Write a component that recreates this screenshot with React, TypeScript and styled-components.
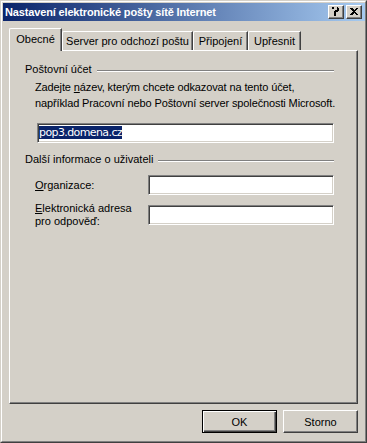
import React from 'react'
import styled, { createGlobalStyle } from 'styled-components'

const GlobalStyle = createGlobalStyle`
  html, body {
    margin: 0;
    padding: 0;
    background: #d4d0c8;
  }
  body {
    font-family: 'Liberation Sans', Arial, sans-serif;
    font-size: 11px;
    color: #000;
  }
`

const tabs = [
  { label: 'Obecné', width: 53, active: true },
  { label: 'Server pro odchozí poštu', width: 131 },
  { label: 'Připojení', width: 55 },
  { label: 'Upřesnit', width: 53 },
]

const App: React.FC = () => {
  return (
    <>
      <GlobalStyle />
      <Window>
        <Frame>
          <TitleBar>
            <Title>Nastavení elektronické pošty sítě Internet</Title>
            <CaptionButtons>
              <CaptionButton>
                <svg width="7" height="9" viewBox="0 0 7 9" shapeRendering="crispEdges">
                  <path d="M1 0h5v1h1v3h-1v1h-2v2h-2v-3h1v-1h2v-3h-3v2h-2v-2h1z" fill="#000" />
                  <rect x="2" y="7" width="2" height="2" fill="#000" />
                </svg>
              </CaptionButton>
              <CaptionButton>
                <svg width="8" height="7" viewBox="0 0 8 7" shapeRendering="crispEdges">
                  <path d="M0 0h2l2 2 2-2h2l-3 3.5 3 3.5h-2l-2-2-2 2h-2l3-3.5z" fill="#000" />
                </svg>
              </CaptionButton>
            </CaptionButtons>
          </TitleBar>

          <Body>
            <TabStrip>
              {tabs.map((t) => (
                <Tab key={t.label} $active={!!t.active} $width={t.width}>
                  {t.label}
                </Tab>
              ))}
            </TabStrip>
            <Panel>
              <GroupHeader>
                <span>Poštovní účet</span>
                <Etched />
              </GroupHeader>
              <Description>
                Zadejte <u>n</u>ázev, kterým chcete odkazovat na tento účet,
                <br />
                například Pracovní nebo Poštovní server společnosti Microsoft.
              </Description>
              <AccountInput>
                <Selected>pop3.domena.cz</Selected>
              </AccountInput>

              <GroupHeader $gap={10}>
                <span>Další informace o uživateli</span>
                <Etched />
              </GroupHeader>
              <Fields>
                <FieldRow>
                  <FieldLabel>
                    <u>O</u>rganizace:
                  </FieldLabel>
                  <TextBox />
                </FieldRow>
                <FieldRow>
                  <FieldLabel>
                    <u>E</u>lektronická adresa
                    <br />
                    pro odpověď:
                  </FieldLabel>
                  <TextBox />
                </FieldRow>
              </Fields>
            </Panel>
            <Footer>
              <Button $default>OK</Button>
              <Button>Storno</Button>
            </Footer>
          </Body>
        </Frame>
      </Window>
    </>
  )
}

export default App

const Window = styled.div`
  width: 367px;
  height: 443px;
  box-sizing: border-box;
  border-top: 1px solid #d4d0c8;
  border-left: 1px solid #d4d0c8;
  border-right: 1px solid #404040;
  border-bottom: 1px solid #404040;
  display: flex;
  overflow: hidden;
`

const Frame = styled.div`
  flex: 1;
  min-width: 0;
  display: flex;
  flex-direction: column;
  border-top: 1px solid #fff;
  border-left: 1px solid #fff;
  border-right: 1px solid #808080;
  border-bottom: 1px solid #808080;
  padding: 1px 0 1px 1px;
`

const TitleBar = styled.div`
  height: 18px;
  display: flex;
  align-items: center;
  justify-content: space-between;
  padding: 0 3px 0 2px;
  background: linear-gradient(to right, #0a246a, #a6caf0);
`

const Title = styled.div`
  color: #fff;
  font-weight: bold;
  font-size: 11px;
  letter-spacing: -0.15px;
  white-space: nowrap;
`

const CaptionButtons = styled.div`
  display: flex;
  gap: 2px;
`

const CaptionButton = styled.div`
  width: 16px;
  height: 14px;
  box-sizing: border-box;
  background: #d4d0c8;
  border-top: 1px solid #fff;
  border-left: 1px solid #fff;
  border-right: 1px solid #404040;
  border-bottom: 1px solid #404040;
  box-shadow: inset -1px -1px #808080;
  display: flex;
  align-items: center;
  justify-content: center;
  padding: 0 1px 1px 0;
`

const Body = styled.div`
  flex: 1;
  min-width: 0;
  display: flex;
  flex-direction: column;
  padding: 7px 7px 6px 6px;
`

const TabStrip = styled.div`
  display: flex;
  align-items: flex-end;
  height: 22px;
`

const Tab = styled.div<{ $active: boolean; $width: number }>`
  width: ${({ $width }) => $width}px;
  height: ${({ $active }) => ($active ? 23 : 19)}px;
  margin-bottom: ${({ $active }) => ($active ? -1 : 0)}px;
  box-sizing: border-box;
  position: relative;
  z-index: ${({ $active }) => ($active ? 1 : 0)};
  background: #d4d0c8;
  border-top: 1px solid #fff;
  border-left: 1px solid #fff;
  border-right: 1px solid #404040;
  box-shadow: inset -1px 0 #808080;
  border-top-left-radius: 2px;
  display: flex;
  justify-content: center;
  padding-top: ${({ $active }) => ($active ? 4 : 3)}px;
  white-space: nowrap;
`

const Panel = styled.div`
  height: 354px;
  box-sizing: border-box;
  border-top: 1px solid #fff;
  border-left: 1px solid #fff;
  border-right: 1px solid #404040;
  border-bottom: 1px solid #404040;
  box-shadow: inset -1px -1px #808080;
  padding: 12px 23px 0 15px;
  display: flex;
  flex-direction: column;
  min-width: 0;
`

const GroupHeader = styled.div<{ $gap?: number }>`
  display: flex;
  align-items: center;
  gap: 5px;
  line-height: 13px;
  margin-top: ${({ $gap }) => $gap ?? 0}px;
  white-space: nowrap;
`

const Etched = styled.div`
  flex: 1;
  height: 1px;
  margin-top: 3px;
  background: #808080;
  border-bottom: 1px solid #fff;
`

const Description = styled.div`
  margin: 3px 0 0 10px;
  line-height: 16px;
  letter-spacing: -0.12px;
  white-space: nowrap;
`

const sunken = `
  box-sizing: border-box;
  height: 20px;
  background: #fff;
  border-top: 1px solid #808080;
  border-left: 1px solid #808080;
  border-right: 1px solid #fff;
  border-bottom: 1px solid #fff;
  box-shadow: inset 1px 1px #404040, inset -1px -1px #d4d0c8;
`

const AccountInput = styled.div`
  ${sunken}
  margin: 12px 0 0 12px;
  padding: 2px 0 0 1px;
  display: flex;
  align-items: flex-start;
`

const Selected = styled.span`
  background: #0a246a;
  color: #fff;
  line-height: 13px;
  font-family: 'DejaVu Sans', sans-serif;
  font-size: 11px;
  letter-spacing: -0.6px;
`

const Fields = styled.div`
  display: flex;
  flex-direction: column;
  gap: 7px;
  margin-top: 9px;
`

const FieldRow = styled.div`
  display: flex;
  align-items: center;
  padding-left: 10px;
`

const FieldLabel = styled.div`
  width: 113px;
  line-height: 13px;
`

const TextBox = styled.div`
  ${sunken}
  flex: 1;
`

const Footer = styled.div`
  display: flex;
  justify-content: flex-end;
  gap: 6px;
  margin-top: 6px;
`

const Button = styled.div<{ $default?: boolean }>`
  width: 75px;
  height: 23px;
  box-sizing: border-box;
  display: flex;
  align-items: center;
  justify-content: center;
  background: #d4d0c8;
  ${({ $default }) =>
    $default
      ? `
    border: 1px solid #000;
    box-shadow: inset 1px 1px #fff, inset -1px -1px #404040, inset -2px -2px #808080;
  `
      : `
    border-top: 1px solid #fff;
    border-left: 1px solid #fff;
    border-right: 1px solid #404040;
    border-bottom: 1px solid #404040;
    box-shadow: inset -1px -1px #808080;
  `}
`
